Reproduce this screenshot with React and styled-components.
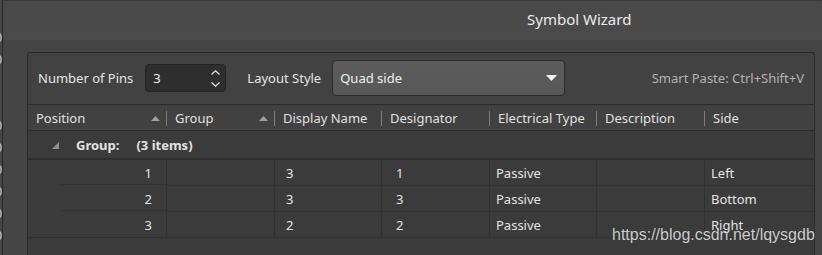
import React from "react";
import styled, { createGlobalStyle } from "styled-components";

const Global = createGlobalStyle`
  html, body { margin: 0; padding: 0; background: #474747; }
  body { font-family: "Noto Sans", "Open Sans", sans-serif; font-size: 13px; color: #e4e4e4; overflow: hidden; }
  * { box-sizing: border-box; }
`;

const COLS = "139px 108px 107px 108px 107px 108px 1fr";

const Page = styled.div`
  position: relative;
  display: flex;
  width: 822px;
  height: 255px;
  overflow: hidden;
  background: #474747;
`;

const Gutter = styled.div`
  width: 3px;
  flex: none;
  border-right: 1px solid #262626;
  overflow: hidden;
  padding-top: 27px;
`;

const Mark = styled.div`
  width: 8px;
  height: 22px;
  margin-left: -6px;
  line-height: 22px;
  text-align: right;
  font-size: 12px;
  color: #c9d5e2;
`;

const Dialog = styled.div`
  flex: 1;
  display: flex;
  flex-direction: column;
  min-width: 0;
`;

const TitleBar = styled.div`
  height: 40px;
  flex: none;
  border-top: 1px solid #3a3a3a;
  background: linear-gradient(#494949, #4b4b4b);
  display: flex;
  align-items: center;
  padding-left: 524px;
  padding-bottom: 4px;
  font-size: 15px;
  color: #ececec;
`;

const Body = styled.div`
  flex: 1;
  display: flex;
  background: #454545;
  padding: 12px 7px 0 24px;
  min-height: 0;
`;

const Panel = styled.div`
  flex: 1;
  display: flex;
  flex-direction: column;
  border: 1px solid #2a2a2a;
  border-bottom: none;
  border-radius: 3px 3px 0 0;
  background: #424242;
  min-width: 0;
`;

const Toolbar = styled.div`
  height: 51px;
  flex: none;
  display: flex;
  align-items: center;
  padding: 0 10px 1px;
`;

const Label = styled.span`
  color: #e6e6e6;
  margin-right: ${(p) => p.$gap || 0}px;
  white-space: nowrap;
`;

const Spin = styled.div`
  width: 81px;
  height: 28px;
  display: flex;
  align-items: center;
  justify-content: space-between;
  background: #2e2e2e;
  border: 1px solid #242424;
  border-radius: 4px;
  padding: 0 5px 0 7px;
  margin-right: 21px;
  color: #f0f0f0;
`;

const Chevrons = styled.div`
  display: flex;
  flex-direction: column;
  gap: 7px;
`;

const Combo = styled.div`
  width: 233px;
  height: 36px;
  display: flex;
  align-items: center;
  justify-content: space-between;
  background: linear-gradient(#5c5c5c, #585858);
  border: 1px solid #2c2c2c;
  border-radius: 4px;
  padding: 0 7px 0 7px;
  color: #f0f0f0;
`;

const Hint = styled.span`
  margin-left: auto;
  color: #b3b3b3;
  white-space: nowrap;
`;

const Table = styled.div`
  flex: 1;
  display: flex;
  flex-direction: column;
  background: #3b3b3b;
  border-top: 1px solid #2c2c2c;
`;

const HeaderRow = styled.div`
  display: grid;
  grid-template-columns: ${COLS};
  height: 26px;
  background: #414141;
  border-bottom: 1px solid #2c2c2c;
`;

const HeaderCell = styled.div`
  display: flex;
  align-items: center;
  padding: 1px 0 0 8px;
  color: #e0e0e0;
  white-space: nowrap;
`;

const HeaderText = styled.span`
  flex: 1;
`;

const SortArrow = styled.svg`
  margin-right: 6px;
  flex: none;
`;

const HeaderDivider = styled.span`
  width: 1px;
  height: 15px;
  background: #7d7d7d;
  flex: none;
`;

const GroupRow = styled.div`
  height: 29px;
  display: flex;
  align-items: center;
  padding: 1px 0 0 24px;
  border-bottom: 2px solid #2e2e2e;
  font-weight: 700;
  color: #e2e2e2;
`;

const Expander = styled.svg`
  margin-right: 17px;
`;

const GroupCount = styled.span`
  margin-left: 17px;
`;

const DataRow = styled.div`
  display: grid;
  grid-template-columns: ${COLS};
  height: 26px;
`;

const PosCell = styled.div`
  display: flex;
  padding-left: 33px;
  border-right: 1px solid #313131;
  border-bottom: 1px solid ${(p) => (p.$last ? "#313131" : "transparent")};
`;

const PosInner = styled.div`
  flex: 1;
  display: flex;
  align-items: center;
  justify-content: flex-end;
  padding: 1px 14px 0 0;
  border-bottom: 1px solid ${(p) => (p.$last ? "transparent" : "#333333")};
`;

const Cell = styled.div`
  display: flex;
  align-items: center;
  padding: 1px 0 0 ${(p) => p.$pad ?? 6}px;
  border-right: 1px solid ${(p) => (p.$end ? "transparent" : "#313131")};
  border-bottom: 1px solid #333333;
  color: #e4e4e4;
  white-space: nowrap;
`;

const Watermark = styled.div`
  position: absolute;
  left: 612px;
  top: 226px;
  font-family: "Liberation Sans", Arial, sans-serif;
  font-size: 16px;
  color: rgba(236, 236, 236, 0.85);
  text-shadow: 0 0 1px rgba(0, 0, 0, 0.35);
  pointer-events: none;
`;

const headers = [
  { name: "Position", sort: true },
  { name: "Group", sort: true },
  { name: "Display Name" },
  { name: "Designator" },
  { name: "Electrical Type" },
  { name: "Description" },
  { name: "Side" },
];

const rows = [
  { pos: "1", disp: "3", des: "1", type: "Passive", side: "Left" },
  { pos: "2", disp: "3", des: "3", type: "Passive", side: "Bottom" },
  { pos: "3", disp: "2", des: "2", type: "Passive", side: "Right" },
];

const marks = ["0", "0", "", "", "0", "0", "0", "0", "0", "0"];

export default function App() {
  return (
    <>
      <Global />
      <Page>
        <Gutter>
          {marks.map((m, i) => (
            <Mark key={i}>{m}</Mark>
          ))}
        </Gutter>
        <Dialog>
          <TitleBar>Symbol Wizard</TitleBar>
          <Body>
            <Panel>
              <Toolbar>
                <Label $gap={12}>Number of Pins</Label>
                <Spin>
                  <span>3</span>
                  <Chevrons>
                    <svg width="9" height="5" viewBox="0 0 9 5">
                      <polyline points="0.5,4.5 4.5,0.8 8.5,4.5" fill="none" stroke="#e8e8e8" strokeWidth="1.2" />
                    </svg>
                    <svg width="9" height="5" viewBox="0 0 9 5">
                      <polyline points="0.5,0.5 4.5,4.2 8.5,0.5" fill="none" stroke="#e8e8e8" strokeWidth="1.2" />
                    </svg>
                  </Chevrons>
                </Spin>
                <Label $gap={11}>Layout Style</Label>
                <Combo>
                  <span>Quad side</span>
                  <svg width="11" height="6" viewBox="0 0 11 6">
                    <polygon points="0,0 11,0 5.5,6" fill="#f4f4f4" />
                  </svg>
                </Combo>
                <Hint>Smart Paste: Ctrl+Shift+V</Hint>
              </Toolbar>
              <Table>
                <HeaderRow>
                  {headers.map((h, i) => (
                    <HeaderCell key={h.name}>
                      <HeaderText>{h.name}</HeaderText>
                      {h.sort && (
                        <SortArrow width="9" height="5" viewBox="0 0 9 5">
                          <polygon points="0,5 9,5 4.5,0" fill="#a0a0a0" />
                        </SortArrow>
                      )}
                      {i < headers.length - 1 && <HeaderDivider />}
                    </HeaderCell>
                  ))}
                </HeaderRow>
                <GroupRow>
                  <Expander width="7" height="7" viewBox="0 0 7 7">
                    <polygon points="7,0 7,7 0,7" fill="#8e8e8e" />
                  </Expander>
                  <span>Group:</span>
                  <GroupCount>(3 items)</GroupCount>
                </GroupRow>
                {rows.map((r, i) => {
                  const last = i === rows.length - 1;
                  return (
                    <DataRow key={r.pos}>
                      <PosCell $last={last}>
                        <PosInner $last={last}>{r.pos}</PosInner>
                      </PosCell>
                      <Cell />
                      <Cell $pad={11}>{r.disp}</Cell>
                      <Cell $pad={14}>{r.des}</Cell>
                      <Cell $pad={6}>{r.type}</Cell>
                      <Cell />
                      <Cell $pad={6} $end>{r.side}</Cell>
                    </DataRow>
                  );
                })}
              </Table>
            </Panel>
          </Body>
        </Dialog>
        <Watermark>https://blog.csdn.net/lqysgdb</Watermark>
      </Page>
    </>
  );
}
